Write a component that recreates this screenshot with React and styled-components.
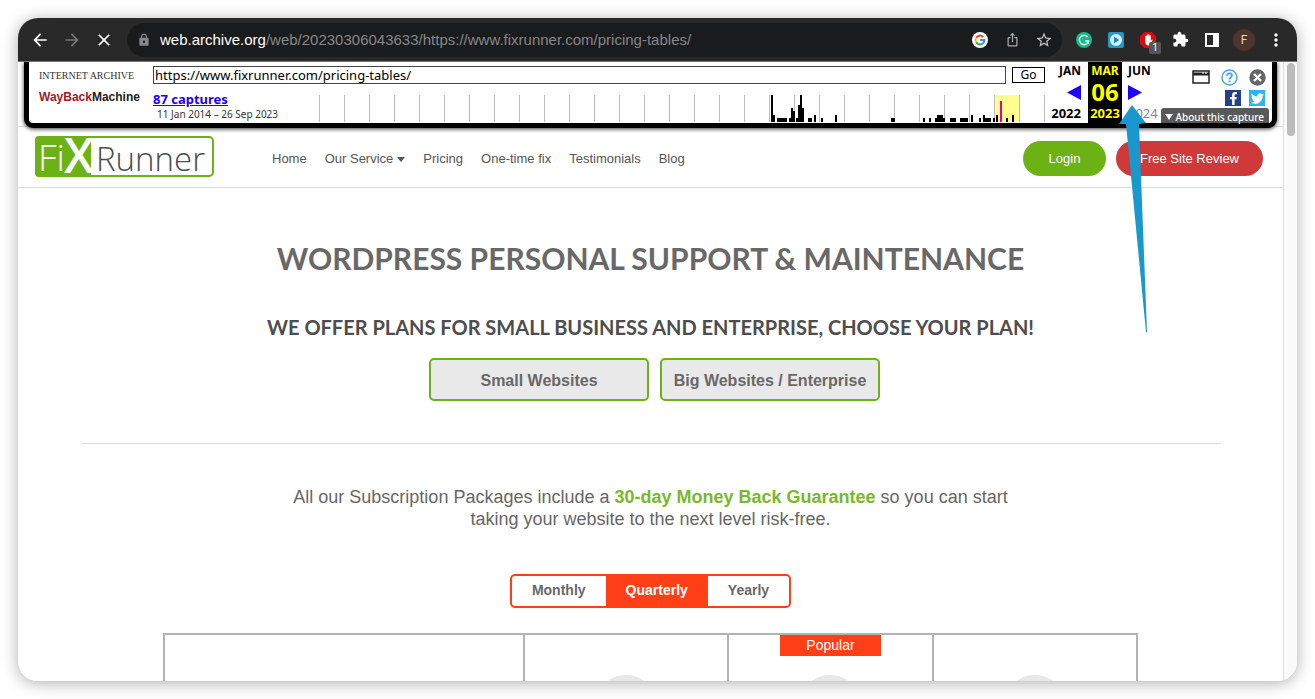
import React from "react";
import styled, { createGlobalStyle } from "styled-components";
import {
  MdArrowBack,
  MdArrowForward,
  MdClose,
  MdExtension,
  MdIosShare,
  MdLock,
  MdMoreVert,
  MdStarBorder,
} from "react-icons/md";
import { FaFacebookF, FaTwitter } from "react-icons/fa";

const sans = '"Liberation Sans", Arial, sans-serif';
const humanist = '"Noto Sans", "Open Sans", sans-serif';
const green = "#6cb215";
const orange = "#ff3f15";

const GlobalStyle = createGlobalStyle`
  *, *::before, *::after { box-sizing: border-box; }
  body { margin: 0; background: #fff; font-family: ${sans}; color: #666; }
  button, input { font-family: inherit; margin: 0; }
  h1, h2, p { margin: 0; }
`;

/* ---------- Browser window ---------- */

const Desktop = styled.div`
  height: 100vh;
  padding: 18px;
`;

const Window = styled.div`
  position: relative;
  display: flex;
  flex-direction: column;
  height: 100%;
  border-radius: 20px;
  overflow: hidden;
`;

const WindowShadow = styled.div`
  height: 100%;
  border-radius: 20px;
  background: #fff;
  box-shadow: 0 2px 16px rgba(0, 0, 0, 0.32);
`;

const BrowserBar = styled.header`
  display: flex;
  flex: none;
  align-items: center;
  height: 44px;
  padding: 0 5px 0 6px;
  background: #292929;
  border-bottom: 1px solid #777;
`;

const BarButton = styled.button`
  position: relative;
  display: flex;
  flex: none;
  align-items: center;
  justify-content: center;
  width: 32px;
  height: 32px;
  padding: 0;
  border: 0;
  background: none;
  color: ${(p) => p.$color || "#fff"};
`;

const AddressBar = styled.div`
  display: flex;
  flex: 1;
  align-items: center;
  min-width: 0;
  height: 34px;
  margin: 0 6px 0 7px;
  padding: 0 2px 0 10px;
  border-radius: 17px;
  background: #1a1b1c;
  color: #84878b;
`;

const Address = styled.div`
  flex: 1;
  min-width: 0;
  margin-left: 9px;
  overflow: hidden;
  white-space: nowrap;
  font: 15px/20px ${sans};

  b {
    font-weight: 400;
    color: #fff;
  }
`;

const CountBadge = styled.span`
  position: absolute;
  right: 3px;
  bottom: 2px;
  width: 12px;
  height: 12px;
  border-radius: 2px;
  background: #555;
  color: #fff;
  font: 10px/12px Roboto, sans-serif;
  text-align: center;
`;

const Avatar = styled.span`
  width: 22px;
  height: 22px;
  border-radius: 50%;
  background: #4e342b;
  color: #e0d8d5;
  font: 12px/22px Roboto, sans-serif;
  text-align: center;
`;

const Viewport = styled.div`
  display: flex;
  flex: 1;
  min-height: 0;
  background: #fff;
`;

const Page = styled.div`
  flex: 1;
  min-width: 0;
  overflow: hidden;
`;

const ScrollTrack = styled.div`
  flex: none;
  width: 14px;
  padding: 1px 1px 0 3px;
  border-left: 1px solid #ddd;
  background: #fafafa;
`;

const ScrollThumb = styled.div`
  width: 8px;
  height: 73px;
  border-radius: 4px;
  background: #bbb;
`;

const PointerArrow = styled.svg`
  position: absolute;
  z-index: 2;
  top: 87px;
  right: 149px;
  width: 30px;
  height: 228px;
  fill: #1898cd;
  pointer-events: none;
`;

/* ---------- Wayback toolbar ---------- */

const Wayback = styled.section`
  position: relative;
  z-index: 1;
  display: flex;
  height: 66px;
  margin: 0 6px -2px;
  padding-left: 10px;
  border: solid #000;
  border-width: 0 5px 5px;
  border-radius: 0 0 9px 9px;
  background: #fff;
  box-shadow: 0 1px 4px rgba(0, 0, 0, 0.8);
  color: #000;
  font-family: ${humanist};
`;

const WaybackLogo = styled.a`
  display: block;
  flex: none;
  width: 114px;
  padding-top: 9px;
`;

const Timeline = styled.div`
  display: flex;
  flex: 1;
  flex-direction: column;
  min-width: 0;
  padding-top: 4px;
`;

const UrlForm = styled.form`
  display: flex;
  align-items: center;
  gap: 6px;
`;

const UrlInput = styled.input`
  flex: 1;
  min-width: 0;
  height: 18px;
  padding: 0 1px;
  border: 1px solid #444;
  border-radius: 0;
  background: #fff;
  color: #000;
  font-size: 13px;
`;

const GoButton = styled.button`
  width: 33px;
  height: 16px;
  padding: 0;
  border: 1px solid #000;
  background: #fff;
  color: #000;
  font-size: 12px;
  line-height: 14px;
`;

const TimelineRow = styled.div`
  display: flex;
  justify-content: space-between;
`;

const Captures = styled.div`
  padding-top: 7px;
  white-space: nowrap;
  font-size: 10px;
  line-height: 14px;
  color: #333;

  a {
    display: block;
    color: #2200ee;
    font-size: 13px;
    font-weight: 700;
    line-height: 16px;
  }

  span {
    padding-left: 4px;
  }
`;

const Sparkline = styled.svg`
  display: block;
  flex: none;
  width: 726px;
  height: 27px;
  margin-top: 11px;
`;

const Calendar = styled.div`
  display: grid;
  flex: none;
  grid-template-columns: 43px 34px 38px;
  font-size: 12px;
  font-weight: 700;
`;

const CalendarColumn = styled.div`
  display: grid;
  grid-template-rows: 18px 24px 18px;
  align-items: center;
  justify-items: ${(p) => p.$align};
  padding: ${(p) => p.$pad || "0"};
  background: ${(p) => (p.$current ? "#000" : "transparent")};
  color: ${(p) => (p.$current ? "#ff0" : "#000")};
  line-height: 18px;
`;

const Year = styled.span`
  font-size: 13px;
  font-weight: ${(p) => (p.$faint ? 400 : 700)};
  color: ${(p) => (p.$faint ? "#83868f" : "inherit")};
`;

const Day = styled.span`
  font-size: 24px;
  line-height: 24px;
`;

const Tools = styled.div`
  display: flex;
  flex: none;
  flex-direction: column;
  width: 112px;
`;

const ToolRow = styled.div`
  display: flex;
  align-items: center;
  justify-content: flex-end;
  gap: ${(p) => p.$gap}px;
  padding: ${(p) => p.$pad};
`;

const ToolButton = styled.button`
  display: flex;
  align-items: center;
  justify-content: center;
  padding: 0;
  border: 0;
  width: ${(p) => p.$size}px;
  height: ${(p) => p.$size}px;
  background: ${(p) => p.$background || "none"};
  color: #fff;
`;

const AboutButton = styled.button`
  display: flex;
  align-items: center;
  justify-content: space-between;
  height: 15px;
  margin: auto 3px 0 1px;
  padding: 3px 5px 0 4px;
  border: 0;
  border-radius: 3px 3px 0 0;
  background: #595959;
  color: #fff;
  font-size: 10px;
  font-weight: 500;
  line-height: 12px;
  white-space: nowrap;
`;

/* ---------- Site ---------- */

const SiteHeader = styled.header`
  display: flex;
  align-items: center;
  height: 62px;
  padding: 0 20px 0 17px;
  border: solid #ddd;
  border-width: 1px 0;
`;

const SiteNav = styled.nav`
  display: flex;
  flex: 1;
  gap: 18px;
  margin: 4px 0 0 58px;
`;

const NavLink = styled.a`
  display: flex;
  align-items: center;
  gap: 4px;
  color: #555;
  font-size: 13px;
  line-height: 20px;
  text-decoration: none;
  white-space: nowrap;
`;

const Pill = styled.a`
  min-width: 83px;
  height: 35px;
  margin: 2px 0 0 10px;
  padding: 0 24px;
  border-radius: 18px;
  background: ${(p) => p.$background};
  color: #fff;
  font-size: 13px;
  line-height: 35px;
  text-align: center;
  text-decoration: none;
  white-space: nowrap;
`;

const Main = styled.main`
  display: flex;
  flex-direction: column;
  align-items: center;
  padding-top: 50px;
  text-align: center;
`;

const Title = styled.h1`
  color: #686868;
  font: 700 30px/40px Lato, sans-serif;
`;

const Subtitle = styled.h2`
  margin-top: 37px;
  color: #4d4d4d;
  font: 700 20px/24px Lato, sans-serif;
`;

const SizeChoice = styled.div`
  display: flex;
  gap: 11px;
  margin-top: 19px;
  padding-left: 8px;
`;

const SizeButton = styled.button`
  width: 220px;
  height: 43px;
  padding: 2px 0 0;
  border: 2px solid ${green};
  border-radius: 5px;
  background: #e9e9e9;
  color: #686868;
  font-size: 16px;
  font-weight: 700;
`;

const Divider = styled.hr`
  width: 91%;
  max-width: 1140px;
  height: 1px;
  margin: 42px 0;
  border: 0;
  background: #ddd;
`;

const Guarantee = styled.p`
  max-width: 750px;
  font-size: 18px;
  line-height: 22px;

  strong {
    color: #78b928;
  }
`;

const PeriodSwitch = styled.div`
  display: flex;
  height: 34px;
  margin-top: 44px;
  border: 2px solid ${orange};
  border-radius: 5px;
  background: ${orange};
`;

const PeriodButton = styled.button`
  padding: 0 20px 2px;
  border: 0;
  border-radius: ${(p) => p.$radius || "0"};
  background: ${(p) => (p.$active ? orange : "#fff")};
  color: ${(p) => (p.$active ? "#fff" : "#686868")};
  font-size: 14px;
  font-weight: 700;
`;

const PlanTable = styled.table`
  width: 78%;
  max-width: 975px;
  margin-top: 25px;
  border-collapse: collapse;
  table-layout: fixed;

  th {
    height: 180px;
    padding: 0;
    border: 2px solid #b3b3b3;
    vertical-align: top;
    font-weight: 400;
  }

  th:first-child {
    width: 37%;
  }
`;

const PlanTag = styled.div`
  width: 101px;
  height: 40px;
  margin: 0 auto;

  span {
    display: block;
    background: ${orange};
    color: #fff;
    font-size: 14px;
    line-height: 21px;
  }
`;

const PlanCircle = styled.div`
  width: 62px;
  height: 62px;
  margin: 0 auto;
  border-radius: 50%;
  background: #e8e8e8;
`;

/* x, width and height of each capture bar */
const captureBars = [
  [452, 2, 27], [454, 2, 7], [458, 10, 4], [470, 2, 4], [472, 2, 14],
  [474, 2, 11], [477, 2, 4], [479, 2, 17], [481, 2, 27], [483, 2, 14],
  [489, 4, 4], [495, 2, 7], [502, 2, 4], [516, 2, 7], [572, 4, 4],
  [604, 2, 4], [610, 2, 4], [616, 2, 4], [618, 6, 7], [624, 2, 4],
  [631, 6, 4], [641, 8, 4], [652, 2, 7], [660, 2, 4], [664, 2, 7],
  [666, 6, 4], [674, 2, 4], [677, 2, 7], [687, 2, 4], [693, 2, 7],
];

const plans = [{ id: "basic" }, { id: "standard", tag: "Popular" }, { id: "premium" }];

function GoogleIcon() {
  return (
    <svg width="16" height="16" viewBox="0 0 16 16" fill="none" strokeWidth="2">
      <circle cx="8" cy="8" r="8" fill="#fff" />
      <path d="M11.2 5A4.4 4.4 0 0 0 4.2 5.8" stroke="#ea4335" />
      <path d="M4.2 5.8a4.4 4.4 0 0 0 0 4.4" stroke="#fbbc05" />
      <path d="M4.2 10.2a4.4 4.4 0 0 0 6.8 1.1" stroke="#34a853" />
      <path d="M11 11.3A4.4 4.4 0 0 0 12.4 8H8.2" stroke="#4285f4" />
    </svg>
  );
}

function GrammarIcon() {
  return (
    <svg width="16" height="16" viewBox="0 0 16 16" fill="none">
      <circle cx="8" cy="8" r="8" fill="#1bb98a" />
      <path d="M11.5 5A4.6 4.6 0 1 0 12.5 9H9.3M12.6 9l-.4 2.6" stroke="#fff" strokeWidth="1.3" />
    </svg>
  );
}

function PlayIcon() {
  return (
    <svg width="16" height="16" viewBox="0 0 16 16">
      <rect width="16" height="16" rx="2" fill="#2597c4" />
      <circle cx="8" cy="8" r="6" fill="#d9eff8" />
      <path d="M6 4.6 11.2 8 6 11.4z" fill="#1c87b5" />
    </svg>
  );
}

function BlockerIcon() {
  return (
    <svg width="18" height="18" viewBox="0 0 18 18">
      <path d="M5.5 1h7L17 5.5v7L12.5 17h-7L1 12.5v-7z" fill="#de0a12" />
      <path
        d="M6.2 10V5.4a.7.7 0 0 1 1.4 0V4.2a.7.7 0 0 1 1.4 0V4a.7.7 0 0 1 1.4 0v1a.7.7 0 0 1 1.4 0v5l.8-1.3c.5-.5 1.2 0 .9.7l-1.7 3.6c-.5 1-1.2 1.4-2.5 1.4-2.2 0-3.1-1.5-3.1-4.4z"
        fill="#fff"
      />
    </svg>
  );
}

function SidePanelIcon() {
  return (
    <svg width="14" height="14" viewBox="0 0 14 14">
      <path d="M0 0h14v14H0zM2 2v10h6V2z" fill="#fff" fillRule="evenodd" />
    </svg>
  );
}

function WaybackMark() {
  return (
    <svg width="104" height="42" viewBox="0 0 104 42" role="img" aria-label="Internet Archive Wayback Machine">
      <text x="0" y="8" fontFamily="Liberation Serif, serif" fontSize="10" fill="#333">
        INTERNET ARCHIVE
      </text>
      <text x="0" y="30" fontFamily="Liberation Sans, sans-serif" fontSize="12" fontWeight="700" fill="#9c1c26">
        WayBack<tspan fill="#222">Machine</tspan>
      </text>
    </svg>
  );
}

function FixRunnerLogo() {
  return (
    <svg width="179" height="42" viewBox="0 0 179 42" role="img" aria-label="FixRunner">
      <rect x="1" y="1" width="177" height="39" rx="4" fill="#fff" stroke={green} strokeWidth="2" />
      <path d="M4 0h52v41H4a4 4 0 0 1-4-4V4a4 4 0 0 1 4-4z" fill={green} />
      <text x="3" y="35" fontFamily="Open Sans, sans-serif" fontSize="37" fontWeight="300" fill="#fff">
        Fi
      </text>
      <text x="29" y="37" fontFamily="Open Sans, sans-serif" fontSize="48" fontWeight="600" fill="#fff">
        X
      </text>
      <text x="61" y="35" fontFamily="Open Sans, sans-serif" fontSize="33" fontWeight="300" fill="#4c4c4c">
        Runner
      </text>
    </svg>
  );
}

function CaptureTimeline() {
  return (
    <Sparkline viewBox="0 0 726 27" shapeRendering="crispEdges" aria-label="Captures by year">
      <rect x="676" width="24" height="27" fill="#ffff90" />
      {Array.from({ length: 30 }, (_, i) => (
        <rect key={i} x={i * 25} width="1" height="27" fill="#bbb" />
      ))}
      {captureBars.map(([x, w, h]) => (
        <rect key={x} x={x} y={27 - h} width={w} height={h} fill="#000" />
      ))}
      <rect x="681" y="6" width="2" height="21" fill="#ec008c" />
    </Sparkline>
  );
}

function Triangle({ direction }) {
  return (
    <svg width="14" height="15" viewBox="0 0 14 15" fill="#1f00ff">
      <path d={direction === "left" ? "M14 0v15L0 7.5z" : "M0 0v15l14-7.5z"} />
    </svg>
  );
}

function BrowserToolbar() {
  return (
    <BrowserBar>
      <BarButton aria-label="Back"><MdArrowBack size={20} /></BarButton>
      <BarButton aria-label="Forward" $color="#777"><MdArrowForward size={20} /></BarButton>
      <BarButton aria-label="Stop loading"><MdClose size={20} /></BarButton>
      <AddressBar>
        <MdLock size={14} />
        <Address>
          <b>web.archive.org</b>/web/20230306043633/https://www.fixrunner.com/pricing-tables/
        </Address>
        <BarButton aria-label="Search with Google"><GoogleIcon /></BarButton>
        <BarButton aria-label="Share" $color="#aaa"><MdIosShare size={15} /></BarButton>
        <BarButton aria-label="Bookmark" $color="#c4c4c4"><MdStarBorder size={18} /></BarButton>
      </AddressBar>
      <BarButton aria-label="Grammar checker"><GrammarIcon /></BarButton>
      <BarButton aria-label="Video recorder"><PlayIcon /></BarButton>
      <BarButton aria-label="Ad blocker">
        <BlockerIcon />
        <CountBadge>1</CountBadge>
      </BarButton>
      <BarButton aria-label="Extensions"><MdExtension size={17} /></BarButton>
      <BarButton aria-label="Side panel"><SidePanelIcon /></BarButton>
      <BarButton aria-label="Profile"><Avatar>F</Avatar></BarButton>
      <BarButton aria-label="Menu"><MdMoreVert size={20} /></BarButton>
    </BrowserBar>
  );
}

function WaybackToolbar() {
  return (
    <Wayback>
      <WaybackLogo href="#wayback"><WaybackMark /></WaybackLogo>
      <Timeline>
        <UrlForm onSubmit={(e) => e.preventDefault()}>
          <UrlInput aria-label="Archived address" defaultValue="https://www.fixrunner.com/pricing-tables/" />
          <GoButton>Go</GoButton>
        </UrlForm>
        <TimelineRow>
          <Captures>
            <a href="#captures">87 captures</a>
            <span>11 Jan 2014 – 26 Sep 2023</span>
          </Captures>
          <CaptureTimeline />
        </TimelineRow>
      </Timeline>
      <Calendar>
        <CalendarColumn $align="end" $pad="0 7px 0 0">
          <span>JAN</span>
          <ToolButton aria-label="Previous capture" $size={14}><Triangle direction="left" /></ToolButton>
          <Year>2022</Year>
        </CalendarColumn>
        <CalendarColumn $align="center" $current>
          <span>MAR</span>
          <Day>06</Day>
          <Year>2023</Year>
        </CalendarColumn>
        <CalendarColumn $align="start" $pad="0 0 0 6px">
          <span>JUN</span>
          <ToolButton aria-label="Next capture" $size={14}><Triangle direction="right" /></ToolButton>
          <Year $faint>2024</Year>
        </CalendarColumn>
      </Calendar>
      <Tools>
        <ToolRow $gap={11} $pad="6px 6px 0 0">
          <ToolButton aria-label="Screenshot" $size={18}>
            <svg width="18" height="14" viewBox="0 0 18 14" fill="none" stroke="#222" strokeWidth="1.5">
              <path d="M1 1h16v12H1z" />
              <path d="M1 4h16" strokeWidth="3" />
              <path d="M10 3h2m1 0h2" stroke="#fff" strokeWidth="1" />
            </svg>
          </ToolButton>
          <ToolButton aria-label="Help" $size={17}>
            <svg width="17" height="17" viewBox="0 0 17 17" fill="none" stroke="#4ba9e8" strokeWidth="1.5">
              <circle cx="8.5" cy="8.5" r="7.5" />
              <path d="M6 6.8c0-3.4 5-3.2 5-.4 0 1.8-2.4 2-2.4 4" strokeWidth="1.8" />
              <path d="M8.6 11.4v1.8" strokeWidth="2" />
            </svg>
          </ToolButton>
          <ToolButton aria-label="Close toolbar" $size={17}>
            <svg width="17" height="17" viewBox="0 0 17 17">
              <circle cx="8.5" cy="8.5" r="8.2" fill="#666" />
              <path d="m5 5 7 7m0-7-7 7" stroke="#fff" strokeWidth="2.4" />
            </svg>
          </ToolButton>
        </ToolRow>
        <ToolRow $gap={8} $pad="4px 7px 0 0">
          <ToolButton aria-label="Share on Facebook" $size={16} $background="#23408e">
            <FaFacebookF size={13} />
          </ToolButton>
          <ToolButton aria-label="Share on Twitter" $size={16} $background="#26b8f5">
            <FaTwitter size={13} />
          </ToolButton>
        </ToolRow>
        <AboutButton>
          <svg width="8" height="6" viewBox="0 0 8 6" fill="#fff"><path d="M0 0h8L4 6z" /></svg>
          About this capture
        </AboutButton>
      </Tools>
    </Wayback>
  );
}

export default function App() {
  return (
    <Desktop>
      <GlobalStyle />
      <WindowShadow>
        <Window>
          <BrowserToolbar />
          <Viewport>
            <Page>
              <WaybackToolbar />
              <SiteHeader>
                <FixRunnerLogo />
                <SiteNav>
                  <NavLink href="#home">Home</NavLink>
                  <NavLink href="#service">
                    Our Service
                    <svg width="8" height="5" viewBox="0 0 8 5" fill="#555"><path d="M0 0h8L4 5z" /></svg>
                  </NavLink>
                  <NavLink href="#pricing">Pricing</NavLink>
                  <NavLink href="#one-time">One-time fix</NavLink>
                  <NavLink href="#testimonials">Testimonials</NavLink>
                  <NavLink href="#blog">Blog</NavLink>
                </SiteNav>
                <Pill href="#login" $background={green}>Login</Pill>
                <Pill href="#review" $background="#cf393a">Free Site Review</Pill>
              </SiteHeader>
              <Main>
                <Title>WORDPRESS PERSONAL SUPPORT &amp; MAINTENANCE</Title>
                <Subtitle>WE OFFER PLANS FOR SMALL BUSINESS AND ENTERPRISE, CHOOSE YOUR PLAN!</Subtitle>
                <SizeChoice>
                  <SizeButton>Small Websites</SizeButton>
                  <SizeButton>Big Websites / Enterprise</SizeButton>
                </SizeChoice>
                <Divider />
                <Guarantee>
                  All our Subscription Packages include a <strong>30-day Money Back Guarantee</strong> so you
                  can start taking your website to the next level risk-free.
                </Guarantee>
                <PeriodSwitch>
                  <PeriodButton $radius="3px 0 0 3px">Monthly</PeriodButton>
                  <PeriodButton $active>Quarterly</PeriodButton>
                  <PeriodButton $radius="0 3px 3px 0">Yearly</PeriodButton>
                </PeriodSwitch>
                <PlanTable>
                  <thead>
                    <tr>
                      <th />
                      {plans.map((plan) => (
                        <th key={plan.id} scope="col">
                          <PlanTag>{plan.tag && <span>{plan.tag}</span>}</PlanTag>
                          <PlanCircle />
                        </th>
                      ))}
                    </tr>
                  </thead>
                </PlanTable>
              </Main>
            </Page>
            <ScrollTrack><ScrollThumb /></ScrollTrack>
          </Viewport>
          <PointerArrow viewBox="0 0 30 228">
            <path d="M14 0 28 18 21 19 29 227 28 227 8 19 1 19z" />
          </PointerArrow>
        </Window>
      </WindowShadow>
    </Desktop>
  );
}
